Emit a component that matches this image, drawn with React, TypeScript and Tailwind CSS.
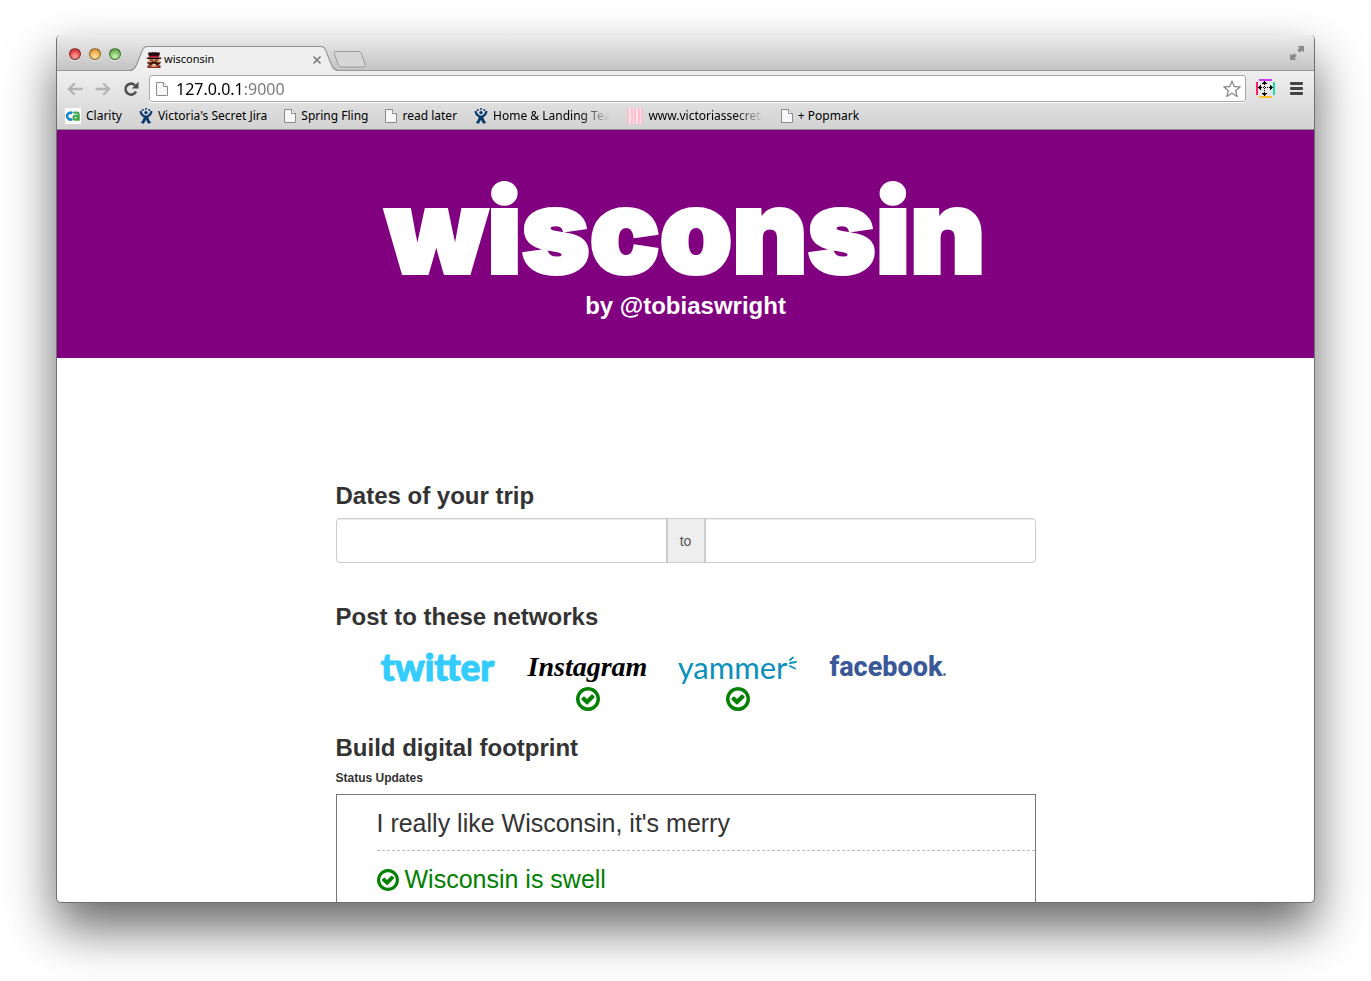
import type { ReactNode } from 'react';
import { useState } from 'react';

function CheckCircle({ className }: { className: string }) {
  return (
    <svg viewBox="128 128 1536 1536" className={className} fill="currentColor" aria-hidden="true">
      <path d="M1299 813l-422 422q-19 19-45 19t-45-19l-294-294q-19-19-19-45t19-45l102-102q19-19 45-19t45 19l147 147 275-275q19-19 45-19t45 19l102 102q19 19 19 45t-19 45zm141 83q0-148-73-273t-198-198-273-73-273 73-198 198-73 273 73 273 198 198 273 73 273-73 198-198 73-273zm224 0q0 209-103 385.5t-279.5 279.5-385.5 103-385.5-103-279.5-279.5-103-385.5 103-385.5 279.5-279.5 385.5-103 385.5 103 279.5 279.5 103 385.5z" />
    </svg>
  );
}

function PageIcon() {
  return (
    <svg viewBox="0 0 12 14" className="h-3.5 w-3 shrink-0" aria-hidden="true">
      <path d="M.5.5h7l4 4v9H.5z" fill="#f7f7f7" stroke="#8b8b8b" />
      <path d="M7.5.5v4h4" fill="#fff" stroke="#8b8b8b" />
    </svg>
  );
}

function JiraIcon() {
  return (
    <svg viewBox="0 0 14 16" className="h-4 w-3.5 shrink-0" fill="#0b3a6b" aria-hidden="true">
      <circle cx="3.8" cy="2" r="1" />
      <circle cx="7" cy="1.1" r="1" />
      <circle cx="10.200" cy="2" r="1" />
      <circle cx="7" cy="4.600" r="1.700" />
      <path d="M.4 3.200l2.200-.5c.4 2.500 1.800 4.500 4.400 5 2.600-.5 4-2.500 4.400-5l2.200.5c-.5 2.900-1.900 4.900-4.300 6 .5 2.100 1.500 3.900 3 5.600l-3 1c-1-1.400-1.700-2.600-2.300-4.100-.6 1.500-1.300 2.700-2.300 4.100l-3-1c1.500-1.700 2.500-3.500 3-5.600C2.300 8.100.9 6.100.4 3.200z" />
    </svg>
  );
}

function ClarityIcon() {
  return (
    <svg viewBox="0 0 16 16" className="size-4 shrink-0" fill="none" strokeWidth="2.600" aria-hidden="true">
      <path d="M0 0h16v16H0z" fill="#fff" />
      <path d="M7.300 5.300A3.300 3.400 0 1 0 7.300 11" stroke="#1b87c9" />
      <circle cx="10.600" cy="9.700" r="2" stroke="#3faa49" strokeWidth="2.200" />
      <path d="M8.400 4.700h3q2.300 0 2.300 2.300v5.800" stroke="#3faa49" strokeWidth="2.200" />
    </svg>
  );
}

function StripesIcon() {
  return (
    <svg viewBox="0 0 16 16" className="size-4 shrink-0" aria-hidden="true">
      <path d="M0 0h16v16H0z" fill="#ffe3ea" />
      <path d="M0 0h2v16H0zM4 0h2v16H4zM7 0h2v16H7zM11 0h2v16h-2zM14 0h2v16h-2z" fill="#ffbfd0" />
    </svg>
  );
}

function Favicon() {
  return (
    <svg viewBox="0 0 16 16" className="size-4 shrink-0" aria-hidden="true">
      <path d="M2 .8C4 0 12 0 14 .8l-1 4H3z" fill="#1d0b0b" />
      <path d="M3 3.800h10v1.800H3z" fill="#c8102e" />
      <path d="M.8 5.500h14.400v1.400H.8z" fill="#2a0d0a" />
      <path d="M2.500 6.900h11v4.600h-11z" fill="#d99a62" />
      <path d="M4 7.500h3v1H4zM9 7.500h3v1H9z" fill="#3a1a10" />
      <path d="M8 9.500c2-1 3 1 4.500 1 1 0 1.500-.3 2.500-1-.2 2.200-1.500 3.500-3.500 3.500-1.600 0-2.600-.7-3.500-1.500-.9.800-1.900 1.500-3.500 1.500C2.500 13 1.200 11.700 1 9.500c1 .7 1.500 1 2.500 1 1.500 0 2.500-2 4.500-1z" fill="#4a160c" />
      <path d="M1.500 13.300h13V16h-13z" fill="#8d2a1c" />
      <path d="M5.500 13h5v2h-5z" fill="#d99a62" />
    </svg>
  );
}

function MeasureIcon() {
  return (
    <svg viewBox="0 0 20 20" className="size-5" shapeRendering="crispEdges" aria-hidden="true">
      <path d="M3 0h13v2H3z" fill="#c83cf0" />
      <path d="M3 17h13v2H3z" fill="#fbc02d" />
      <path d="M0 3h2v13H0z" fill="#ff1e6e" />
      <path d="M17 3h2v13h-2z" fill="#12e0a8" />
      <path d="M8 2h1v1h1v1h1v1H6V4h1V3h1zM8 17h1v-1h1v-1h1v-1H6v1h1v1h1zM2 8v1h1v1h1v1h1V6H4v1H3v1zM17 8v1h-1v1h-1v1h-1V6h1v1h1v1z" />
      <path d="M8.500 5v10M5 8.500h10" stroke="#000" strokeDasharray="1 1" />
    </svg>
  );
}

const lights = [
  'bg-[radial-gradient(circle_at_50%_75%,#ffb0ac,#e8484a_55%,#a52a27)]',
  'bg-[radial-gradient(circle_at_50%_75%,#ffe9a8,#f0ae4c_55%,#b0731c)]',
  'bg-[radial-gradient(circle_at_50%_75%,#d2f5b8,#7cc063_55%,#3f7f30)]',
];

type Bookmark = { label: string; icon: ReactNode; fade?: string };

const bookmarks: Bookmark[] = [
  { label: 'Clarity', icon: <ClarityIcon /> },
  { label: "Victoria's Secret Jira", icon: <JiraIcon /> },
  { label: 'Spring Fling', icon: <PageIcon /> },
  { label: 'read later', icon: <PageIcon /> },
  { label: 'Home & Landing Tea', icon: <JiraIcon />, fade: '[mask-image:linear-gradient(90deg,#000_75%,transparent)]' },
  { label: 'www.victoriassecret.', icon: <StripesIcon />, fade: '[mask-image:linear-gradient(90deg,#000_75%,transparent)]' },
  { label: '+ Popmark', icon: <PageIcon /> },
];

function BrowserChrome() {
  return (
    <div className="shrink-0 font-['Noto_Sans',sans-serif] text-[11px] text-black">
      <div className="flex h-9 items-end border-b border-b-[#969696] bg-linear-to-b from-[#ececec] to-[#c4c4c4] pl-3">
        <div className="flex gap-2 self-center pt-0.5">
          {['Close', 'Minimize', 'Zoom'].map((name, i) => (
            <button
              key={name}
              aria-label={name}
              className={`size-3 rounded-full border border-black/40 shadow-[0_1px_0_#ffffff90] ${lights[i]}`}
            />
          ))}
        </div>
        <div className="relative -mb-px ml-2 flex h-[25px] w-[210px] items-center gap-0.5 pt-0.5 pr-[18px] pl-[17px]">
          <svg viewBox="0 0 206 25" preserveAspectRatio="none" className="absolute inset-0 size-full" aria-hidden="true">
            <path d="M0 25c4 0 6-2 7.500-6L13 4.500C14 1.500 15.500.5 18 .5h170c2.500 0 4 1 5 4L198.500 19c1.500 4 3.500 6 7.500 6z" fill="#efefef" />
            <path d="M0 24.500c4 0 6-2 7.500-6L13 4.500C14 1.500 15.500.5 18 .5h170c2.500 0 4 1 5 4l5.500 14c1.500 4 3.500 6 7.500 6" fill="none" stroke="#909090" />
          </svg>
          <span className="relative"><Favicon /></span>
          <span className="relative grow">wisconsin</span>
          <button aria-label="Close tab" className="relative">
            <svg viewBox="0 0 8 8" className="size-2" stroke="#808080" strokeWidth="1.600" aria-hidden="true">
              <path d="M.5.5l7 7M7.500.5l-7 7" />
            </svg>
          </button>
        </div>
        <button aria-label="New tab" className="-ml-1.5 mb-0.5">
          <svg viewBox="0 0 33 17" className="h-[17px] w-[33px]" aria-hidden="true">
            <path d="M3 .5h22c2 0 3 .5 3.700 2.500L32 13c.6 2-.2 3-2 3H9c-2 0-3-.8-3.700-2.500L1.300 3C.7 1.300 1.300.5 3 .5z" fill="#d6d6d6" stroke="#9a9a9a" />
          </svg>
        </button>
        <button aria-label="Full screen" className="mr-2.5 mb-2.5 ml-auto">
          <svg viewBox="0 0 14 14" className="size-3.5" fill="#8a8a8a" aria-hidden="true">
            <path d="M7.500 0H14v6.500l-2-2-2.200 2.200-2.500-2.500L9.500 2zM6.500 14H0V7.500l2 2 2.200-2.200 2.500 2.500L4.500 12z" />
          </svg>
        </button>
      </div>
      <div className="bg-linear-to-b from-[#efefef] to-[#d2d2d2]">
        <div className="flex items-center px-2.5 pt-1">
          <button aria-label="Back">
            <svg viewBox="0 0 16 14" className="h-3.5 w-4" fill="none" stroke="#b4b4b4" strokeWidth="2.400" strokeLinecap="round" aria-hidden="true">
              <path d="M7 2L2 7l5 5M2 7h12.500" />
            </svg>
          </button>
          <button aria-label="Forward" className="ml-3">
            <svg viewBox="0 0 16 14" className="h-3.5 w-4" fill="none" stroke="#b4b4b4" strokeWidth="2.400" strokeLinecap="round" aria-hidden="true">
              <path d="M9 2l5 5-5 5M14 7H1.500" />
            </svg>
          </button>
          <button aria-label="Reload" className="ml-3">
            <svg viewBox="0 0 16 16" className="size-4" aria-hidden="true">
              <path d="M12 4.300A5.500 5.500 0 1 0 13 10.500" fill="none" stroke="#505050" strokeWidth="2.600" />
              <path d="M15.500.8v6.700H8.800z" fill="#505050" />
            </svg>
          </button>
          <div className="ml-2.5 flex h-[27px] grow items-center rounded-[3px] border border-[#a8a8a8] bg-white pr-1 pl-1.5 shadow-[0_1px_0_#ffffff]">
            <PageIcon />
            <input
              aria-label="Address"
              defaultValue="127.0.0.1:9000"
              className="ml-2 min-w-0 grow bg-[linear-gradient(90deg,#000_66px,#777_66px)] bg-clip-text text-[16px] leading-6 text-transparent caret-black outline-none"
            />
            <button aria-label="Bookmark this page">
              <svg viewBox="0 0 18 18" className="size-[18px]" fill="#fff" stroke="#8a8a8a" strokeWidth="1.300" strokeLinejoin="round" aria-hidden="true">
                <path d="M9 1l2.200 5.500 5.900.4-4.500 3.800 1.500 5.800L9 13.300l-5.100 3.200 1.500-5.800L.9 6.900l5.900-.4z" />
              </svg>
            </button>
          </div>
          <button aria-label="Measure" className="ml-2.5">
            <MeasureIcon />
          </button>
          <button aria-label="Menu" className="ml-3.5">
            <svg viewBox="0 0 14 14" className="size-3.5" fill="#444" aria-hidden="true">
              <rect y="0" width="13" height="3" rx="1" />
              <rect y="5" width="13" height="3" rx="1" />
              <rect y="10" width="13" height="3" rx="1" />
            </svg>
          </button>
        </div>
        <nav className="flex h-7 items-center gap-[17px] border-b border-[#8a8a8a] pl-2 text-xs">
          {bookmarks.map((b) => (
            <a key={b.label} href="#" className="flex items-center gap-[5px] whitespace-nowrap">
              {b.icon}
              <span className={b.fade}>{b.label}</span>
            </a>
          ))}
        </nav>
      </div>
    </div>
  );
}

const networks: { name: string; mark: ReactNode }[] = [
  {
    name: 'twitter',
    mark: (
      <span className="font-['Lato',sans-serif] text-[37px] font-black text-[#33ccff] [-webkit-text-stroke:1px_#33ccff]">
        twitter
      </span>
    ),
  },
  {
    name: 'instagram',
    mark: (
      <span className="font-['Liberation_Serif',serif] text-[28px] font-bold text-black italic">Instagram</span>
    ),
  },
  {
    name: 'yammer',
    mark: (
      <span className="flex items-center font-['Lato',sans-serif] text-[31px] text-[#0c8fbd]">
        yammer
        <svg viewBox="0 0 10 14" className="mb-2 h-3.5 w-2.5" fill="none" stroke="currentColor" strokeWidth="1.800" strokeLinecap="round" aria-hidden="true">
          <path d="M3 4L6 1.500M3 7L9 6M3 10l5 2.500" />
        </svg>
      </span>
    ),
  },
  {
    name: 'facebook',
    mark: (
      <span className="flex items-baseline font-['Roboto',sans-serif] text-[27px] font-extrabold text-[#3b5998]">
        facebook
        <svg viewBox="0 0 3 3" className="size-[3px]" fill="currentColor" aria-hidden="true">
          <circle cx="1.500" cy="1.500" r="1.300" />
        </svg>
      </span>
    ),
  },
];

const updates = ["I really like Wisconsin, it's merry", 'Wisconsin is swell'];

export default function App() {
  const [posting, setPosting] = useState<string[]>(['instagram', 'yammer']);
  const [chosen, setChosen] = useState<string[]>(['Wisconsin is swell']);
  const toggle = (list: string[], item: string) =>
    list.includes(item) ? list.filter((x) => x !== item) : [...list, item];

  return (
    <div className="flex h-screen flex-col bg-white px-14 pt-[35px] pb-[78px]">
      <div className="flex min-h-0 grow flex-col overflow-hidden rounded-[5px] border-x border-b border-[#707070] bg-white shadow-[0_25px_50px_#00000099]">
        <BrowserChrome />
        <div className="min-h-0 grow overflow-y-auto font-['Liberation_Sans',Arial,sans-serif] text-[#333] [scrollbar-width:none]">
          <header className="flex flex-col items-center bg-[#800080] pt-[42px] pb-[38px] text-white">
            <h1 className="font-['Inter',sans-serif] text-[116px] leading-[118px] font-black [-webkit-text-stroke:4px_white]">
              wisconsin
            </h1>
            <p className="mt-0.5 text-2xl leading-7 font-bold">by @tobiaswright</p>
          </header>
          <main className="mx-auto max-w-[700px] pt-[124px]">
            <h2 className="text-2xl leading-7 font-bold">Dates of your trip</h2>
            <div className="mt-2 flex h-[45px] overflow-hidden rounded border border-[#ccc]">
              <input aria-label="Trip start date" className="min-w-0 flex-1 px-4 shadow-[inset_0_1px_1px_#00000013] outline-none" />
              <span className="flex w-10 items-center justify-center border-x-2 border-[#ccc] bg-[#eee] text-sm text-[#555]">to</span>
              <input aria-label="Trip end date" className="min-w-0 flex-1 px-4 shadow-[inset_0_1px_1px_#00000013] outline-none" />
            </div>
            <h2 className="mt-10 text-2xl leading-7 font-bold">Post to these networks</h2>
            <div className="mt-4 flex h-[87px] gap-[30px] pl-[42px]">
              {networks.map((n) => (
                <button
                  key={n.name}
                  aria-pressed={posting.includes(n.name)}
                  onClick={() => setPosting(toggle(posting, n.name))}
                  className="flex w-[120px] flex-col items-center"
                >
                  <span className="flex h-10 items-center leading-10">{n.mark}</span>
                  {posting.includes(n.name) && <CheckCircle className="size-6 text-[#008000]" />}
                </button>
              ))}
            </div>
            <h2 className="text-2xl leading-7 font-bold">Build digital footprint</h2>
            <h3 className="mt-2 text-xs leading-4 font-bold">Status Updates</h3>
            <ul className="mt-2 border border-[#777] pl-10 text-[25px]">
              {updates.map((u) => {
                const on = chosen.includes(u);
                return (
                  <li key={u} className="border-b border-dashed border-[#bbb]">
                    <button
                      aria-pressed={on}
                      onClick={() => setChosen(toggle(chosen, u))}
                      className={`flex h-[55px] w-full items-center gap-1.5 pt-0.5 text-left ${on ? 'text-[#008000]' : ''}`}
                    >
                      {on && <CheckCircle className="size-[22px]" />}
                      {u}
                    </button>
                  </li>
                );
              })}
            </ul>
          </main>
        </div>
      </div>
    </div>
  );
}
